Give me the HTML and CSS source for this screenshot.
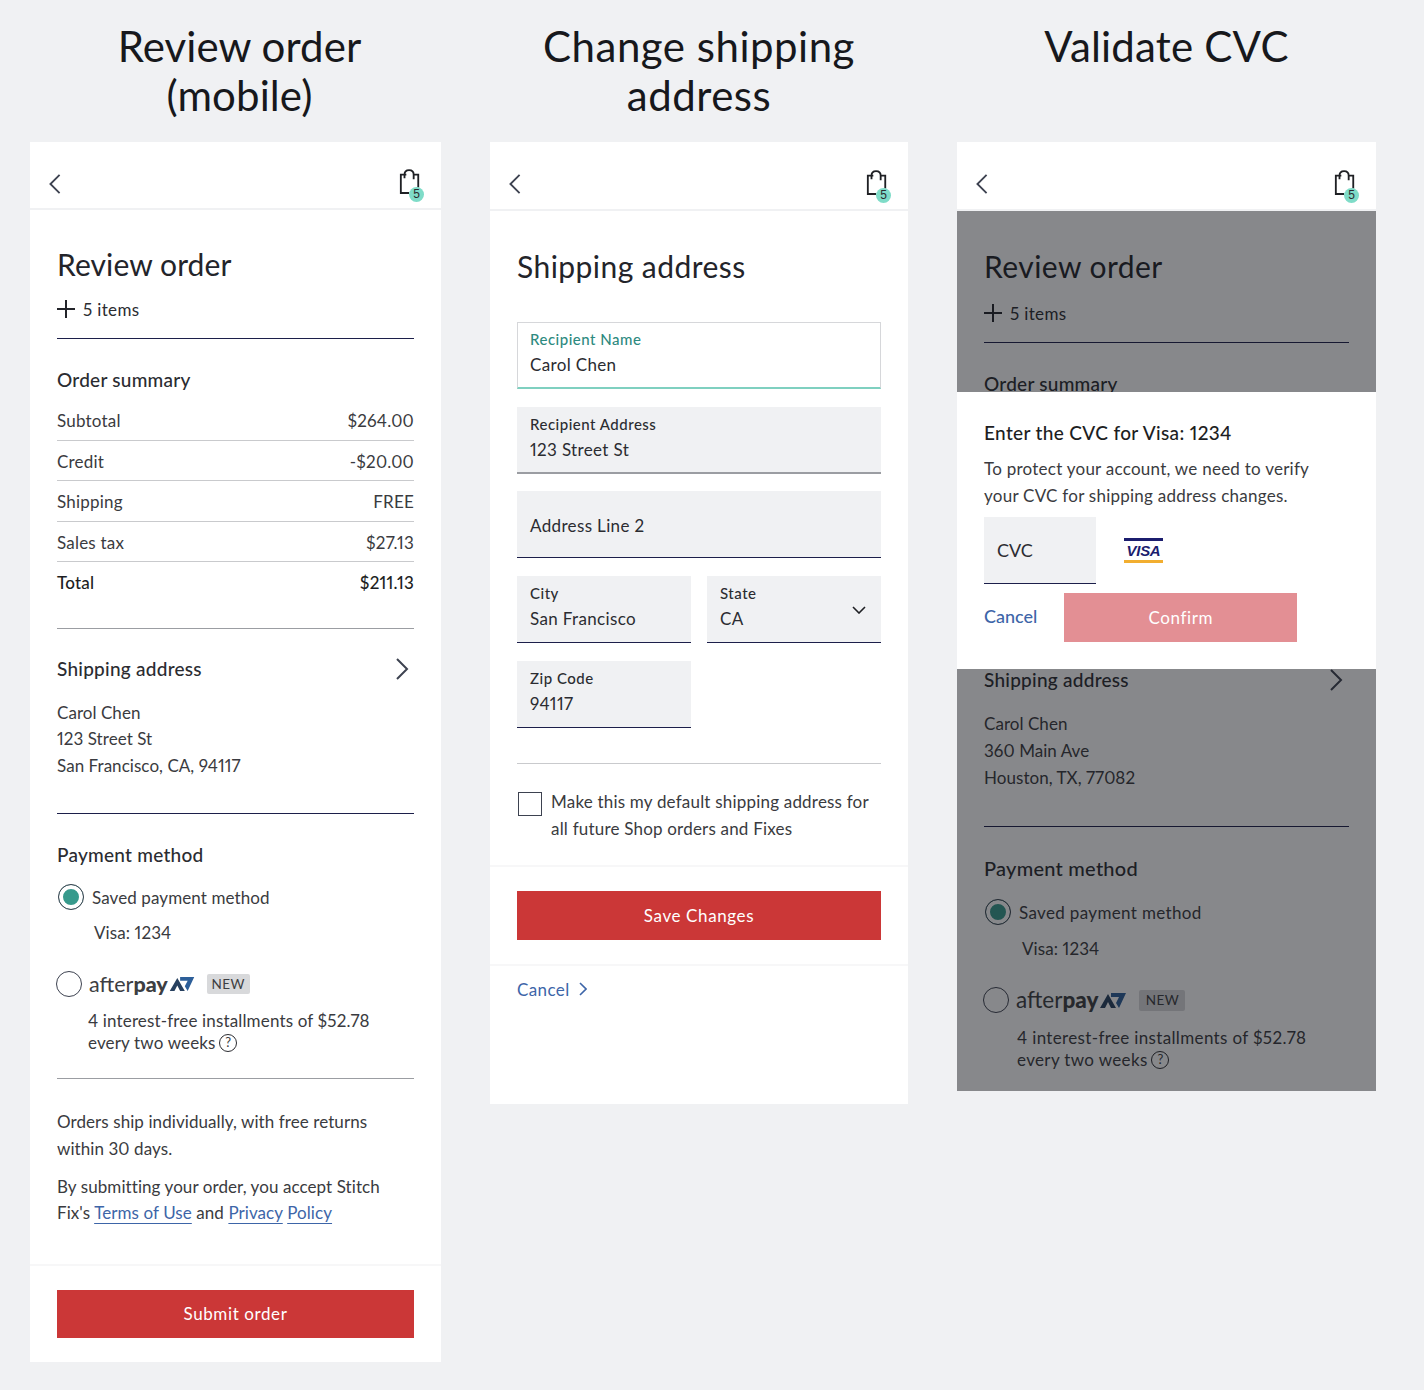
FILE: index.html
```html
<!DOCTYPE html>
<html>
<head>
<meta charset="utf-8">
<title>Checkout flows</title>
<link rel="stylesheet" href="styles.css">
</head>
<body>
<div class="board">

  <!-- review order -->
  <section class="flow flow-review">
    <h2 class="flow-title">Review order<br>(mobile)</h2>
    <div class="phone">
      <header class="topbar">
        <svg class="back" viewBox="0 0 14 24"><path d="M12 2 2 12l10 10"/></svg>
        <div class="bag">
          <svg viewBox="0 0 24 28"><path d="M8 6H2v20h9M6 10V6c0-3 2-5 5-5s5 2 5 5v5M16 6h5v14"/></svg>
          <span class="bag-count">5</span>
        </div>
      </header>
      <div class="content">
        <h1 class="page-title">Review order</h1>
        <div class="items"><svg class="plus" viewBox="0 0 18 18"><path d="M9 0v18M0 9h18"/></svg>5 items</div>
        <h3 class="sec-title first">Order summary</h3>
        <div class="row"><span>Subtotal</span><span>$264.00</span></div>
        <div class="row"><span>Credit</span><span>-$20.00</span></div>
        <div class="row"><span>Shipping</span><span>FREE</span></div>
        <div class="row"><span>Sales tax</span><span>$27.13</span></div>
        <div class="row total"><span>Total</span><span>$211.13</span></div>
        <div class="sec-head">
          <h3 class="sec-title">Shipping address</h3>
          <svg class="next" viewBox="0 0 14 24"><path d="M2 2l10 10L2 22"/></svg>
        </div>
        <p class="address">Carol Chen<br>123 Street St<br>San Francisco, CA, 94117</p>
        <h3 class="sec-title pay">Payment method</h3>
        <div class="radio-row"><span class="radio on"></span>Saved payment method</div>
        <div class="card-line">Visa: 1234</div>
        <div class="after-row">
          <span class="radio"></span>
          <span class="after">after<b>pay</b><svg viewBox="0 0 28 17"><path class="ap-dark" d="M1 16 9 2l8 14h-5L9 10l-3 6z"/><path class="ap-blue" d="M12 1h15l-7 15-3-5 3-6h-8z"/></svg></span>
          <span class="new">NEW</span>
        </div>
        <p class="install">4 interest-free installments of $52.78<br>every two weeks <span class="help">?</span></p>
        <div class="legal">
          <p>Orders ship individually, with free returns<br>within 30 days.</p>
          <p>By submitting your order, you accept Stitch<br>Fix's <a href="#">Terms of Use</a> and <a href="#">Privacy</a> <a href="#">Policy</a></p>
        </div>
      </div>
      <div class="submit-bar"><button class="btn">Submit order</button></div>
    </div>
  </section>

  <!-- change shipping address -->
  <section class="flow flow-address">
    <h2 class="flow-title">Change shipping<br>address</h2>
    <div class="phone">
      <header class="topbar">
        <svg class="back" viewBox="0 0 14 24"><path d="M12 2 2 12l10 10"/></svg>
        <div class="bag">
          <svg viewBox="0 0 24 28"><path d="M8 6H2v20h9M6 10V6c0-3 2-5 5-5s5 2 5 5v5M16 6h5v14"/></svg>
          <span class="bag-count">5</span>
        </div>
      </header>
      <div class="form">
        <h1 class="page-title">Shipping address</h1>
        <div class="field focus"><label>Recipient Name</label><span>Carol Chen</span></div>
        <div class="field grey-line"><label>Recipient Address</label><span>123 Street St</span></div>
        <div class="field empty"><span>Address Line 2</span></div>
        <div class="field-pair">
          <div class="field"><label>City</label><span>San Francisco</span></div>
          <div class="field state">
            <label>State</label><span>CA</span>
            <svg class="caret" viewBox="0 0 14 8"><path d="M1 1l6 6 6-6"/></svg>
          </div>
        </div>
        <div class="field-pair">
          <div class="field"><label>Zip Code</label><span>94117</span></div>
        </div>
        <div class="default-row">
          <span class="checkbox"></span>
          <p>Make this my default shipping address for all future Shop orders and Fixes</p>
        </div>
      </div>
      <div class="save-bar"><button class="btn tall">Save Changes</button></div>
      <div class="cancel-bar"><a href="#">Cancel</a><svg viewBox="0 0 8 14"><path d="M1 1l6 6-6 6"/></svg></div>
    </div>
  </section>

  <!-- validate cvc -->
  <section class="flow flow-cvc">
    <h2 class="flow-title">Validate CVC</h2>
    <div class="phone">
      <header class="topbar">
        <svg class="back" viewBox="0 0 14 24"><path d="M12 2 2 12l10 10"/></svg>
        <div class="bag">
          <svg viewBox="0 0 24 28"><path d="M8 6H2v20h9M6 10V6c0-3 2-5 5-5s5 2 5 5v5M16 6h5v14"/></svg>
          <span class="bag-count">5</span>
        </div>
      </header>
      <div class="dimmed">
        <div class="content">
          <h1 class="page-title">Review order</h1>
          <div class="items"><svg class="plus" viewBox="0 0 18 18"><path d="M9 0v18M0 9h18"/></svg>5 items</div>
          <h3 class="sec-title first">Order summary</h3>
          <div class="hidden-rows"></div>
          <div class="sec-head">
            <h3 class="sec-title">Shipping address</h3>
            <svg class="next" viewBox="0 0 14 24"><path d="M2 2l10 10L2 22"/></svg>
          </div>
          <p class="address">Carol Chen<br>360 Main Ave<br>Houston, TX, 77082</p>
          <h3 class="sec-title pay">Payment method</h3>
          <div class="radio-row"><span class="radio on"></span>Saved payment method</div>
          <div class="card-line">Visa: 1234</div>
          <div class="after-row">
            <span class="radio"></span>
            <span class="after">after<b>pay</b><svg viewBox="0 0 28 17"><path class="ap-dark" d="M1 16 9 2l8 14h-5L9 10l-3 6z"/><path class="ap-blue" d="M12 1h15l-7 15-3-5 3-6h-8z"/></svg></span>
            <span class="new">NEW</span>
          </div>
          <p class="install">4 interest-free installments of $52.78<br>every two weeks <span class="help">?</span></p>
        </div>
        <div class="scrim"></div>
        <div class="modal">
          <h3 class="modal-title">Enter the CVC for Visa: 1234</h3>
          <p class="modal-text">To protect your account, we need to verify<br>your CVC for shipping address changes.</p>
          <div class="cvc-row">
            <div class="cvc-input">CVC</div>
            <div class="visa"><span>VISA</span></div>
          </div>
          <div class="modal-actions">
            <a href="#">Cancel</a>
            <button class="btn faded">Confirm</button>
          </div>
        </div>
      </div>
    </div>
  </section>

</div>
</body>
</html>
```

FILE: styles.css
```css
* { box-sizing: border-box; }

body {
  margin: 0;
  background: #f0f1f3;
  font-family: "Lato", "Open Sans", sans-serif;
  font-variant-numeric: proportional-nums;
  color: #2b2c31;
  font-size: 17px;
}

.board {
  display: grid;
  grid-template-columns: 411px 418px 419px;
  column-gap: 49px;
  padding-left: 30px;
  height: 1390px;
  align-items: start;
}

.flow-title {
  margin: 0;
  height: 142px;
  padding-top: 22px;
  font-size: 42px;
  line-height: 49px;
  font-weight: 400;
  text-align: center;
  color: #17181c;
  letter-spacing: .5px;
}
.flow-review .flow-title { padding-left: 8px; letter-spacing: .1px; }
.flow-cvc .flow-title { letter-spacing: .2px; }

.phone { background: #fff; }

/* top bar with back arrow and the bag */
.topbar {
  height: 69px;
  padding: 0 20px 0 18px;
  display: flex;
  align-items: center;
  justify-content: space-between;
  border-bottom: 2px solid #f0f1f3;
}
.flow-review .topbar { height: 68px; }
.back { width: 14px; height: 22px; margin-top: 17px; }
.back path, .next path {
  fill: none;
  stroke: #3d4250;
  stroke-width: 2;
}
.bag { position: relative; width: 22px; height: 26px; margin-top: 14px; }
.bag svg { width: 22px; height: 26px; display: block; }
.bag path { fill: none; stroke: #1f2024; stroke-width: 2; }
.bag-count {
  position: absolute;
  right: -3px;
  bottom: -7px;
  width: 15px;
  height: 15px;
  border-radius: 50%;
  background: #7fdcc8;
  font-size: 12px;
  line-height: 15px;
  text-align: center;
  font-family: "Liberation Sans", sans-serif;
}

.content { padding: 0 27px; }

.page-title {
  margin: 0;
  padding-top: 36px;
  font-size: 30px;
  line-height: 38px;
  font-weight: 400;
  letter-spacing: .45px;
  color: #23242a;
}
.flow-review .page-title { padding-top: 35px; letter-spacing: .1px; }

.items {
  display: flex;
  align-items: center;
  height: 24px;
  margin-top: 14px;
  letter-spacing: .35px;
}
.plus { width: 18px; height: 18px; margin-right: 8px; }
.plus path { stroke: #23242a; stroke-width: 2; }

.sec-title {
  margin: 0;
  font-size: 19px;
  font-weight: 500;
  line-height: 24px;
  letter-spacing: .25px;
}
.sec-title.first {
  margin-top: 17px;
  padding-top: 29px;
  border-top: 1px solid #1c1f4a;
}

.row {
  display: flex;
  justify-content: space-between;
  height: 40.5px;
  padding-top: 9px;
  line-height: 24px;
  border-bottom: 1px solid #c9cacd;
  color: #3a3b40;
  letter-spacing: .2px;
}
.sec-title.first + .row { margin-top: 8px; }
.row.total {
  border-bottom: 1px solid #9b9da2;
  height: 67px;
  font-weight: 500;
  color: #1d1e22;
}

.sec-head {
  display: flex;
  justify-content: space-between;
  align-items: center;
  margin-top: 28px;
  padding-right: 5px;
}
.next { width: 14px; height: 24px; }
.flow-cvc .sec-head { padding-right: 6px; margin-top: 29px; }

.address {
  margin: 19px 0 0;
  line-height: 26.4px;
  letter-spacing: .05px;
  padding-bottom: 34px;
  border-bottom: 1px solid #1c1f4a;
  color: #3a3b40;
}

.sec-title.pay { margin-top: 29px; }

.radio {
  display: inline-block;
  width: 26px;
  height: 26px;
  border-radius: 50%;
  border: 1px solid #3d4250;
  background: #fff;
  flex: none;
}
.radio.on {
  background: #379a8c;
  box-shadow: inset 0 0 0 4px #fff;
}

.radio-row {
  display: flex;
  align-items: center;
  gap: 8px;
  margin-top: 17px;
  padding-left: 1px;
  color: #3a3b40;
  letter-spacing: .1px;
}
.card-line {
  margin-top: 12px;
  padding-left: 37px;
  color: #3a3b40;
  letter-spacing: .1px;
}

.after-row {
  display: flex;
  align-items: center;
  margin-top: 28px;
  margin-left: -1px;
}
.after {
  display: flex;
  align-items: center;
  margin-left: 7px;
  font-size: 21.5px;
  line-height: 26px;
  color: #3d3e42;
}
.after b { font-weight: 900; }
.after svg { width: 28px; height: 16px; }
.ap-dark { fill: #27405f; }
.ap-blue { fill: #2d5f99; }
.new {
  margin-left: 11px;
  width: 43px;
  height: 20px;
  line-height: 20px;
  text-align: center;
  background: #d8d9db;
  border-radius: 2px;
  font-size: 13.5px;
  letter-spacing: .4px;
  color: #3d3e42;
}

.install {
  margin: 13px 0 0 31px;
  line-height: 22px;
  padding-bottom: 24px;
  color: #3a3b40;
  letter-spacing: .15px;
}
.help {
  display: inline-block;
  width: 18px;
  height: 18px;
  border: 1.5px solid #2b2c31;
  border-radius: 50%;
  font-size: 13px;
  line-height: 15px;
  text-align: center;
  letter-spacing: 0;
  vertical-align: top;
  margin-left: -1px;
  margin-top: 2px;
}

.legal {
  border-top: 1px solid #9b9da2;
  padding-top: 30px;
  color: #3a3b40;
  letter-spacing: .08px;
  line-height: 26.4px;
}
.legal p { margin: 0 0 12px; }
.legal a {
  color: #3d65a8;
  text-decoration: underline;
  text-underline-offset: 4px;
  text-decoration-thickness: 1px;
}

.submit-bar {
  margin-top: 37px;
  padding: 24px 27px 24px;
  border-top: 2px solid #f7f7f8;
}

.btn {
  display: block;
  width: 100%;
  height: 48px;
  border: none;
  background: #cb3737;
  color: #fff;
  font-family: inherit;
  font-size: 17px;
  letter-spacing: .6px;
  padding: 0;
}
.btn.tall { height: 49px; }
.btn.faded { background: #e38f94; }

/* form column */
.form { padding: 0 27px; }
.form .page-title { margin-bottom: 37px; }

.field {
  position: relative;
  display: flex;
  flex-direction: column;
  justify-content: center;
  height: 67px;
  margin-bottom: 18px;
  padding: 0 13px 6px;
  background: #f0f1f3;
  border-bottom: 1px solid #1c1f4a;
  line-height: 25px;
  letter-spacing: .35px;
}
.field label { font-size: 15px; font-weight: 500; letter-spacing: .5px; }
.field.focus {
  background: #fff;
  border: 1px solid #d6d7da;
  border-bottom: 2px solid #7fd0c0;
  padding: 0 12px 6px;
  margin-bottom: 18px;
}
.field.focus label { color: #2e8a80; }
.field.grey-line { border-bottom: 2px solid #9b9da2; margin-bottom: 17px; }
.field.empty { padding: 2px 13px 0; }

.field-pair {
  display: grid;
  grid-template-columns: 174px 174px;
  column-gap: 16px;
}
.caret {
  position: absolute;
  right: 15px;
  top: 30px;
  width: 14px;
  height: 8px;
}
.caret path { fill: none; stroke: #1f2024; stroke-width: 1.6; }

.default-row {
  display: flex;
  gap: 9px;
  margin-top: 17px;
  padding: 25px 0 23px 1px;
  border-top: 1px solid #c9cacd;
  letter-spacing: .2px;
}
.default-row p { margin: 0; line-height: 26.5px; color: #3a3b40; }
.checkbox {
  width: 24px;
  height: 24px;
  border: 1px solid #3d4250;
  flex: none;
  margin-top: 3px;
}

.save-bar {
  padding: 24px 27px;
  border-top: 2px solid #f7f7f8;
  border-bottom: 2px solid #f7f7f8;
}

.cancel-bar {
  display: flex;
  align-items: center;
  gap: 9px;
  height: 138px;
  padding: 0 27px 92px;
  color: #3d65a8;
  letter-spacing: .4px;
}
.cancel-bar a { color: #3d65a8; text-decoration: none; }
.cancel-bar svg { width: 8px; height: 14px; }
.cancel-bar path { fill: none; stroke: #3d65a8; stroke-width: 1.6; }

/* cvc column, page below is dimmed by the scrim */
.dimmed { position: relative; height: 880px; overflow: hidden; }
.flow-cvc .items { margin-top: 16px; }
.hidden-rows { height: 243px; }
.flow-cvc .address { line-height: 27px; padding-bottom: 35px; margin-top: 18px; }
.flow-cvc .sec-title.pay { margin-top: 29px; font-size: 20px; }
.flow-cvc .radio-row { margin-top: 19px; letter-spacing: .35px; }
.flow-cvc .card-line { padding-left: 38px; margin-top: 13px; letter-spacing: .1px; }
.flow-cvc .after-row { margin-top: 28px; }
.flow-cvc .after { font-size: 22.5px; }
.flow-cvc .after svg { width: 30px; height: 17px; }
.flow-cvc .new { width: 46px; height: 21px; line-height: 21px; }
.flow-cvc .install { margin-top: 14px; margin-left: 33px; letter-spacing: .35px; padding-bottom: 0; }

.scrim {
  position: absolute;
  inset: 0;
  background: rgba(16, 18, 24, .5);
}

.modal {
  position: absolute;
  left: 0;
  right: 0;
  top: 181px;
  height: 277px;
  background: #fff;
  padding: 28px 27px 0;
}
.modal-title {
  margin: 0;
  font-size: 19px;
  font-weight: 500;
  line-height: 26px;
  letter-spacing: .35px;
  color: #1d1e22;
}
.modal-text {
  margin: 9px 0 0;
  line-height: 27px;
  letter-spacing: .25px;
  color: #3a3b40;
}
.cvc-row {
  display: flex;
  align-items: center;
  gap: 28px;
  margin-top: 8px;
}
.cvc-input {
  width: 112px;
  height: 67px;
  background: #f0f1f3;
  border-bottom: 1px solid #1c1f4a;
  padding: 22px 13px 0;
  font-size: 18px;
}
.visa {
  width: 39px;
  height: 25px;
  border-top: 3px solid #1b1d6e;
  border-bottom: 3px solid #f2ae30;
  text-align: center;
  margin-top: -1px;
}
.visa span {
  display: block;
  font-family: "Liberation Sans", sans-serif;
  font-size: 15px;
  line-height: 19px;
  font-weight: 700;
  font-style: italic;
  color: #1b1d6e;
  letter-spacing: -.3px;
}
.modal-actions {
  display: flex;
  align-items: center;
  gap: 27px;
  margin-top: 9px;
}
.modal-actions a {
  color: #3d65a8;
  text-decoration: none;
  font-size: 18px;
  font-weight: 500;
  margin-top: -3px;
}
.modal-actions .btn { width: 233px; height: 49px; }
```
